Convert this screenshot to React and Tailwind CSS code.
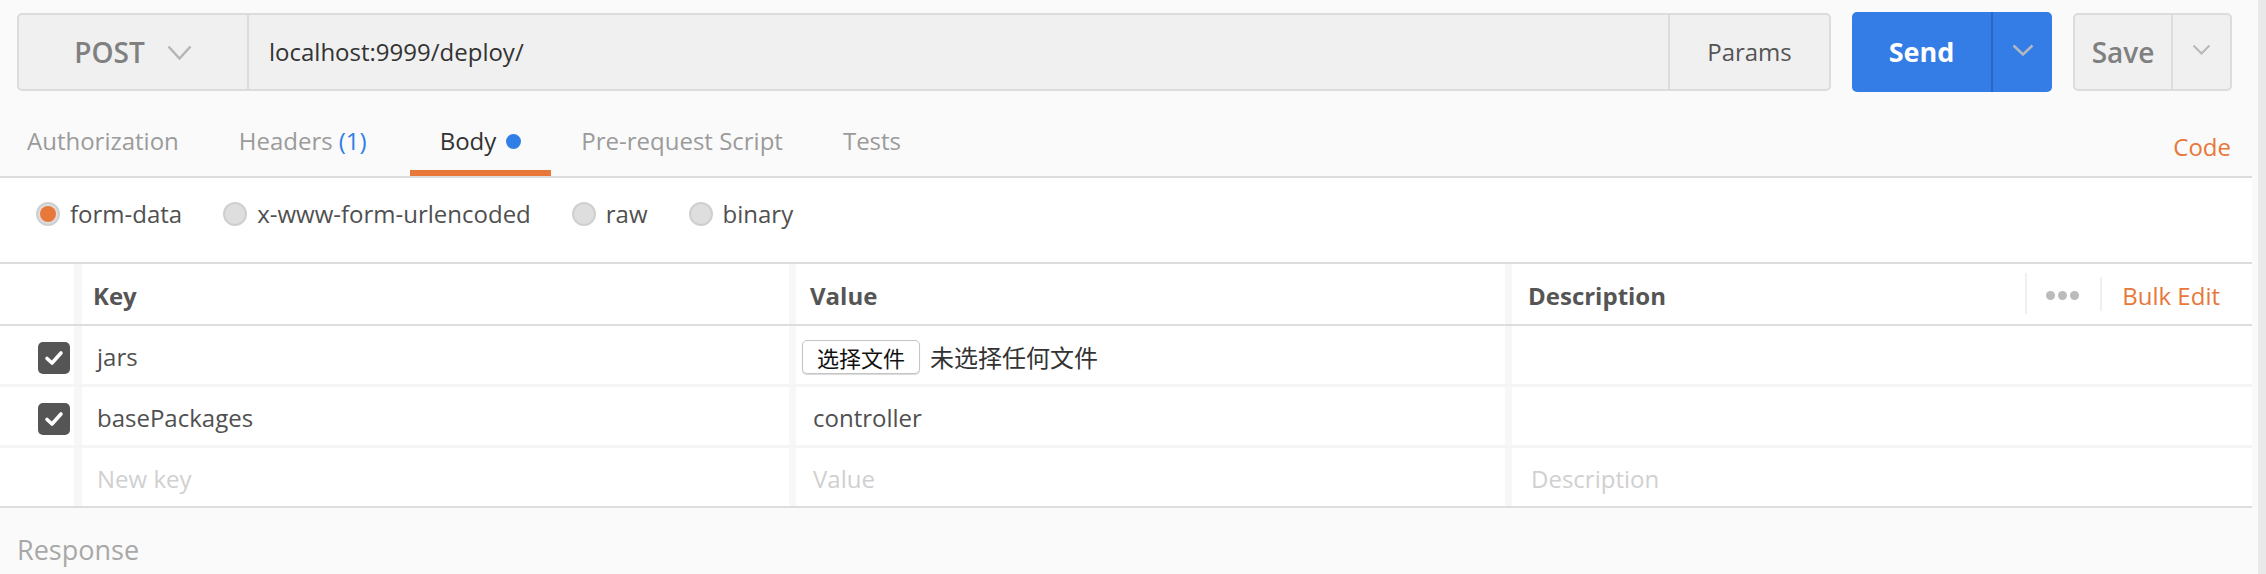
import React from "react";

function Chevron({ w, h, color, stroke = 2.5 }) {
  return (
    <svg width={w} height={h} viewBox={`0 0 ${w} ${h}`} fill="none">
      <path d={`M1.5 1.5 L${w / 2} ${h - 1.5} L${w - 1.5} 1.5`} stroke={color} strokeWidth={stroke} />
    </svg>
  );
}

function Checkbox() {
  return (
    <div className="flex h-[32px] w-[32px] items-center justify-center rounded-[5px] bg-[#555555]">
      <svg width="32" height="32" viewBox="0 0 32 32" fill="none">
        <path d="M9 16.5 L14 21 L23 11" stroke="#ffffff" strokeWidth="3.6" strokeLinecap="round" strokeLinejoin="round" />
      </svg>
    </div>
  );
}

function Radio({ checked, label }) {
  return (
    <div className="flex items-center gap-[10px]">
      <div className="flex h-[24px] w-[24px] items-center justify-center rounded-full border-2 border-[#cfcfcf] bg-[#dedede]">
        {checked && <div className="h-[16px] w-[16px] rounded-full bg-[#e8773a]" />}
      </div>
      <span className="text-[24px] text-[#505050]">{label}</span>
    </div>
  );
}

const tabs = [
  { label: "Authorization", cls: "ml-[-3px]" },
  { label: "Headers", count: "(1)" },
  { label: "Body", active: true, cls: "ml-[13px]" },
  { label: "Pre-request Script" },
  { label: "Tests" },
];

const rows = [
  { key: "jars", file: true },
  { key: "basePackages", value: "controller" },
];

export default function App() {
  return (
    <div className="flex h-[574px] w-[2266px] overflow-hidden bg-[#fafafa] font-['Open_Sans',sans-serif]">
      <div className="flex w-[2252px] flex-col">
        {/* request bar */}
        <div className="flex h-[91px] pl-[17px] pr-[20px] pt-[13px]">
          <div className="flex h-[78px] w-[1814px] rounded-[5px] border-2 border-[#dcdcdc] bg-[#f0f0f0]">
            <div className="flex w-[230px] items-center justify-center gap-[22px] border-r-2 border-[#dcdcdc]">
              <span className="text-[28px] font-semibold text-[#808080]">POST</span>
              <Chevron w={25} h={15} color="#b5b5b5" />
            </div>
            <div className="flex flex-1 items-center pl-[20px] text-[24px] text-[#333333]">localhost:9999/deploy/</div>
            <div className="flex w-[161px] items-center justify-center border-l-2 border-[#dcdcdc] text-[24px] text-[#555555]">
              Params
            </div>
          </div>
          <div className="ml-[21px] mt-[-1px] flex h-[80px] w-[200px] rounded-[5px] bg-[#347ce6]">
            <div className="flex w-[141px] items-center justify-center border-r-2 border-[#2a67c4] text-[27px] font-bold text-white">
              Send
            </div>
            <div className="flex flex-1 items-center justify-center pb-[4px]">
              <Chevron w={22} h={12} color="#b2b8c2" />
            </div>
          </div>
          <div className="ml-[21px] flex h-[78px] w-[159px] rounded-[5px] border-2 border-[#dcdcdc] bg-[#f0f0f0]">
            <div className="flex w-[98px] items-center justify-center border-r-2 border-[#dcdcdc] text-[28px] font-semibold text-[#808080]">
              Save
            </div>
            <div className="flex flex-1 items-center justify-center pb-[6px]">
              <Chevron w={19} h={11} color="#b8b8b8" stroke={2} />
            </div>
          </div>
        </div>

        {/* tabs */}
        <div className="flex h-[87px] border-b-2 border-[#dddddd]">
          {tabs.map((t) => (
            <div
              key={t.label}
              className={`flex h-[85px] items-center px-[30px] pt-[21px] text-[24px] border-b-[6px] ${
                t.active ? "border-[#e8773a] text-[#333333]" : "border-transparent text-[#9b9b9b]"
              } ${t.cls || ""}`}
            >
              <span>{t.label}</span>
              {t.count && <span className="ml-[6px] text-[#2f7fe6]">{t.count}</span>}
              {t.active && <span className="ml-[10px] h-[15px] w-[15px] rounded-full bg-[#2f7fe6]" />}
            </div>
          ))}
          <div className="ml-auto flex h-[85px] items-center pr-[21px] pt-[27px] text-[24px] text-[#e8773a]">Code</div>
        </div>

        {/* body type */}
        <div className="flex h-[84px] items-center gap-[41px] bg-white pb-[12px] pl-[36px]">
          <Radio checked label="form-data" />
          <Radio label="x-www-form-urlencoded" />
          <Radio label="raw" />
          <Radio label="binary" />
        </div>

        {/* params table */}
        <div className="flex flex-col border-t-2 border-[#dddddd] bg-white">
          <div className="flex h-[62px] border-b-2 border-[#dddddd] text-[24px] font-bold text-[#555555]">
            <div className="w-[82px] border-r-[8px] border-[#f7f7f7]" />
            <div className="flex w-[714px] items-center border-r-[7px] border-[#f7f7f7] pl-[11px] pt-[3px]">Key</div>
            <div className="flex w-[716px] items-center border-r-[7px] border-[#f7f7f7] pl-[14px] pt-[3px]">Value</div>
            <div className="flex flex-1 items-center pl-[16px] pr-[32px] pt-[3px]">
              <span>Description</span>
              <div className="ml-auto mt-[-4px] h-[41px] w-[2px] bg-[#f0f0f0]" />
              <div className="ml-[19px] flex gap-[3px]">
                <div className="h-[9px] w-[9px] rounded-full bg-[#bbbbbb]" />
                <div className="h-[9px] w-[9px] rounded-full bg-[#bbbbbb]" />
                <div className="h-[9px] w-[9px] rounded-full bg-[#bbbbbb]" />
              </div>
              <div className="ml-[21px] mt-[-4px] h-[34px] w-[2px] bg-[#f0f0f0]" />
              <span className="ml-[20px] font-normal text-[#e8773a]">Bulk Edit</span>
            </div>
          </div>

          {rows.map((r) => (
            <div key={r.key} className="flex h-[61px] border-b-[3px] border-[#f5f5f5] text-[24px] text-[#505050]">
              <div className="flex w-[82px] items-center border-r-[8px] border-[#f7f7f7] pl-[38px] pt-[6px]">
                <Checkbox />
              </div>
              <div className="flex w-[714px] items-center border-r-[7px] border-[#f7f7f7] pl-[15px] pt-[4px]">{r.key}</div>
              {r.file ? (
                <div className="flex w-[716px] items-center border-r-[7px] border-[#f7f7f7] pl-[6px] pt-[3px] font-['Noto_Sans_CJK_SC',sans-serif]">
                  <span className="rounded-[5px] border border-[#c4c4c4] bg-white px-[14px] py-[1px] text-[22px] leading-[30px] text-[#111111] shadow-[0_1px_1px_rgba(0,0,0,0.15)]">
                    选择文件
                  </span>
                  <span className="ml-[10px] text-[24px] text-[#333333]">未选择任何文件</span>
                </div>
              ) : (
                <div className="flex w-[716px] items-center border-r-[7px] border-[#f7f7f7] pl-[17px] pt-[4px]">{r.value}</div>
              )}
              <div className="flex-1" />
            </div>
          ))}

          <div className="flex h-[60px] border-b-2 border-[#dddddd] text-[24px] text-[#d0d0d0]">
            <div className="w-[82px] border-r-[8px] border-[#f7f7f7]" />
            <div className="flex w-[714px] items-center border-r-[7px] border-[#f7f7f7] pl-[15px] pt-[4px]">New key</div>
            <div className="flex w-[716px] items-center border-r-[7px] border-[#f7f7f7] pl-[17px] pt-[4px]">Value</div>
            <div className="flex flex-1 items-center pl-[19px] pt-[4px]">Description</div>
          </div>
        </div>

        {/* response */}
        <div className="flex-1 bg-[#fafafa] pl-[17px] pt-[22px] text-[27px] text-[#a8a8a8]">Response</div>
      </div>
      <div className="flex w-[14px] justify-end bg-[#fafafa]">
        <div className="h-full w-[8px] bg-[#e9e9e9]" />
      </div>
    </div>
  );
}
